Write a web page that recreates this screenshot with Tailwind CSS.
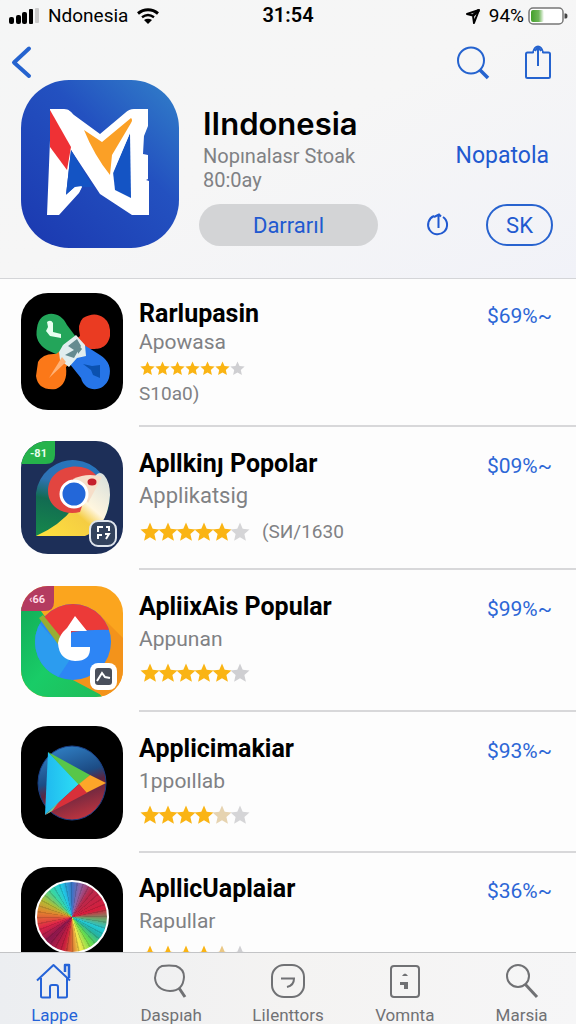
<!DOCTYPE html>
<html lang="id">
<head>
    <meta charset="UTF-8">
    <meta name="viewport" content="width=device-width, initial-scale=1.0">
    <title>IIndonesia</title>
    <script src="https://cdn.jsdelivr.net/npm/@tailwindcss/browser@4"></script>
</head>
<body class="h-screen flex flex-col overflow-hidden bg-[#fdfdfd] text-black font-['Roboto',sans-serif]">

    <!-- Shared shapes -->
    <svg class="hidden">
        <symbol id="star" viewBox="0 0 20 20"><path d="M10 .5l2.7 6.3 6.8.6-5.1 4.5 1.5 6.8L10 15.2l-5.9 3.5 1.5-6.8L.5 7.4l6.8-.6z"/></symbol>
    </svg>

    <header class="shrink-0 bg-linear-to-br from-[#f5f6f6] via-[#f6f6f6] to-[#f1f2f8] border-b border-[#d4d5d8]">
        <!-- Status bar -->
        <div class="h-8 grid grid-cols-[1fr_auto_1fr] items-center pl-2 pr-2 text-lg">
            <div class="flex items-center gap-2">
                <svg class="w-8 h-4" viewBox="0 0 32 16">
                    <rect x="1" y="9" width="5" height="7" rx="2"/>
                    <rect x="8" y="7" width="5" height="9" rx="2"/>
                    <rect x="14" y="4" width="5" height="12" rx="2"/>
                    <rect x="21" y="1" width="4" height="15" rx="1"/>
                    <rect x="27" y="0" width="4" height="15" rx="1" fill="#cbcbcb"/>
                </svg>
                <span class="text-[19px]">Ndonesia</span>
                <svg class="w-6 h-4" viewBox="0 0 24 16" fill="none" stroke="#000" stroke-width="3">
                    <path d="M2 5.500C8 .5 16 .5 22 5.500"/>
                    <path d="M6 9.300c4-3 8-3 12 0" stroke-width="2.400"/>
                    <path d="M8 12l4 4 4-4c-2.500-1.600-5.500-1.600-8 0z" fill="#000" stroke="none"/>
                </svg>
            </div>
            <span class="text-[20px] font-semibold">31:54</span>
            <div class="flex items-center justify-end gap-1">
                <svg class="w-4 h-[18px]" viewBox="0 0 16 18" fill="none" stroke="#000" stroke-width="2" stroke-linejoin="round"><path d="M14 3L2 7l6 1.500L9 16z"/><path d="M14 3L8 8.500" stroke-width="3"/></svg>
                <span class="text-[19px] ml-1">94%</span>
                <svg class="w-10 h-[18px]" viewBox="0 0 40 18">
                    <defs><linearGradient id="charge"><stop offset="0" stop-color="#43a02a"/><stop offset=".6" stop-color="#6fb659"/><stop offset="1" stop-color="#fff"/></linearGradient></defs>
                    <rect x="1" y="1" width="34" height="16" rx="4" fill="#fff" stroke="#777" stroke-width="1.500"/>
                    <rect x="3" y="3" width="13" height="12" rx="2" fill="url(#charge)"/>
                    <path d="M36.500 6.500h1.500q1.500 0 1.500 2.500t-1.500 2.500h-1.500z" fill="#444"/>
                </svg>
            </div>
        </div>

        <!-- Toolbar -->
        <div class="h-12 flex items-center justify-between pl-2 pr-6 pt-3 text-[#2563cf]">
            <button aria-label="Kembali">
                <svg class="w-7 h-9" viewBox="0 0 28 36" fill="none" stroke="currentColor" stroke-width="4" stroke-linecap="round" stroke-linejoin="round"><path d="M21 4.500L6 18.500l15 13.500"/></svg>
            </button>
            <div class="flex gap-[34px]">
                <button aria-label="Cari">
                    <svg class="w-[34px] h-9" viewBox="0 0 34 36" fill="none" stroke="currentColor" stroke-width="2"><circle cx="15" cy="16.500" r="13"/><path d="M24 26l8 8" stroke-width="3.500"/></svg>
                </button>
                <button aria-label="Bagikan">
                    <svg class="w-7 h-9" viewBox="0 0 28 36" fill="none" stroke="currentColor" stroke-width="2" stroke-linejoin="round"><path d="M9 8.500H3.500A1.500 1.500 0 0 0 2 10v22.500A1.500 1.500 0 0 0 3.500 34h21a1.500 1.500 0 0 0 1.500-1.500V10a1.500 1.500 0 0 0-1.500-1.500H19c-1-4-3-6-5-6-2 0-4 2-5 6z"/><path d="M10 8.500h8" stroke="#f5f5f7" stroke-width="3"/><path d="M11 7l3-4 3 4M14 3v19"/></svg>
                </button>
            </div>
        </div>

        <!-- App summary -->
        <div class="flex gap-5 pl-[21px] pr-[23px] pb-[30px]">
            <svg class="w-[158px] h-[168px] shrink-0 rounded-[48px]" viewBox="0 0 158 168">
                <defs><linearGradient id="hero" x1=".2" y1="1" x2="1" y2=".1"><stop offset="0" stop-color="#1c3cb2"/><stop offset=".6" stop-color="#2351c0"/><stop offset="1" stop-color="#307ac8"/></linearGradient></defs>
                <rect width="158" height="168" fill="url(#hero)"/>
                <path d="M29 29h14c5 0 7 3 10 6l26 19 25-21q4-4 9-4h14v17l-4 10-1 18 5 1v24l-2 1 3 1v34h-17L79 114 50 70l-5 45 9-8h7l-3 6-20 22H26l3-75z" fill="#fff"/>
                <path d="M50 70l-5 45 9-8h18z" fill="#1454c4"/>
                <path d="M45 115l9-8 7-1-3 6-11 12z" fill="#fff"/>
                <path d="M109 53L92 92l2 18 16 8z" fill="#1454c4"/>
                <path d="M90 98l19-45v-8L88 80z" fill="#fff"/>
                <path d="M29 30l21 37-4 23-17-23z" fill="#ef3135"/>
                <path d="M63 50l18 12 29-24q2 2 0 5L91 75l-2 20q-16-20-26-45z" fill="#fba026"/>
            </svg>
            <div class="flex-1 pt-6">
                <h1 class="pl-1 text-[31px] leading-10 font-semibold font-['Inter',sans-serif]">IIndonesia</h1>
                <div class="flex items-center justify-between px-1 leading-6">
                    <p class="text-[20px] text-[#808184]">Nopınalasr Stoak</p>
                    <a href="#" class="text-[23px] text-[#2159d0]">Nopatola</a>
                </div>
                <p class="pl-1 text-[20px] leading-6 text-[#808184]">80:0ay</p>
                <div class="mt-3 flex items-center justify-between">
                    <button class="w-[179px] h-[42px] rounded-full bg-[#d3d4d6] text-[22px] text-[#2159d0]">Darrarıl</button>
                    <div class="flex items-center gap-9 text-[#2159d0]">
                        <button aria-label="Info">
                            <svg class="w-6 h-6" viewBox="0 0 24 24" fill="none" stroke="currentColor" stroke-width="2"><path d="M8 3a9.500 9.500 0 1 0 9 1M8 4l5-2.500 2 2M12.500 2v13"/></svg>
                        </button>
                        <button class="w-[67px] h-[42px] rounded-full border-2 border-[#2863cf] text-[22px]">SK</button>
                    </div>
                </div>
            </div>
        </div>
    </header>

    <main class="flex-1 min-h-0 overflow-hidden">
        <ul>
            <li class="flex gap-4 pl-[21px]">
                <svg class="w-[102px] h-[117px] mt-[14px] shrink-0 rounded-[27px]" viewBox="0 0 102 117">
                    <rect width="102" height="117"/>
                    <path d="M16 35C18 17 39 16 46 32L61 52 46 66 26 57Q13 49 16 35z" fill="#23a55a"/>
                    <path d="M62 25q12-7 21 0 7 5 6 18c-3 14-14 13-20 13L51 65 42 57l17-14q-3-12 3-18z" fill="#ea3b22"/>
                    <path d="M17 69q5-9 18-8l18-13 10 9-18 17q2 17-10 22-18 2-20-13z" fill="#fb7818"/>
                    <path d="M44 65L60 50 79 62q13 8 9 23c-5 15-24 15-28 0z" fill="#2675e8"/>
                    <path d="M42 52l13-10 9 10 1 11-9 2-8 9-9-7-1-8z" fill="#e1edee"/>
                    <path d="M47 53l9-7 4 7-7 12-9-3 9-5zM56 50l5 6-4 5z" fill="#658b90"/>
                    <path d="M41 64l4 5-17 16z" fill="#ffb277"/>
                    <path d="M26 29q4-3 6 1v9l8 2v4l-11-2-4-5 2-4z" fill="#e7fff0"/>
                    <path d="M62 71l9 2 8-1v13l-7-3-2-5z" fill="#0b51af"/>
                </svg>
                <div class="flex-1 pt-[19px] pb-[19px] border-b-2 border-[#d8d8da]">
                    <div class="flex items-center justify-between pr-6">
                        <h2 class="text-[25px] leading-8 font-bold">Rarlupasin</h2>
                        <a href="#" class="text-[21px] leading-7 pt-1 text-[#2c66d6]">$69%~</a>
                    </div>
                    <p class="text-[21px] leading-6 text-[#808184]">Apowasa</p>
                    <div class="h-7 pl-px flex items-center text-[#fab414]" role="img" aria-label="6 / 7">
                        <svg class="size-[15px] fill-current"><use href="#star"/></svg>
                        <svg class="size-[15px] fill-current"><use href="#star"/></svg>
                        <svg class="size-[15px] fill-current"><use href="#star"/></svg>
                        <svg class="size-[15px] fill-current"><use href="#star"/></svg>
                        <svg class="size-[15px] fill-current"><use href="#star"/></svg>
                        <svg class="size-[15px] fill-current"><use href="#star"/></svg>
                        <svg class="size-[15px] fill-[#cfcfd2]"><use href="#star"/></svg>
                    </div>
                    <p class="text-[19px] leading-6 text-[#808184]">S10a0)</p>
                </div>
            </li>

            <li class="flex gap-4 pl-[21px]">
                <svg class="w-[102px] h-[113px] mt-[14px] shrink-0 rounded-[27px]" viewBox="0 0 102 113">
                    <defs>
                        <linearGradient id="drop" x1="0" y1="1" x2=".2" y2="0"><stop offset="0" stop-color="#16894b"/><stop offset=".5" stop-color="#126b52"/><stop offset=".75" stop-color="#2f72b4"/><stop offset="1" stop-color="#2874bb"/></linearGradient>
                        <linearGradient id="beak" x1="0" y1="1" x2="1" y2="0"><stop offset="0" stop-color="#ffe23d"/><stop offset=".45" stop-color="#f5cd43"/><stop offset=".6" stop-color="#fff6df"/><stop offset="1" stop-color="#d4dddc"/></linearGradient>
                    </defs>
                    <rect width="102" height="113" fill="#1d2f58"/>
                    <path d="M15 95V52a37 38 0 1 1 37 43z" fill="url(#drop)"/>
                    <path d="M15 95Q53 78 63 46l12-12q4-4 8 0 6 7 6 20-2 32-25 41z" fill="url(#beak)"/>
                    <path d="M75 34C61 18 27 25 27 50c0 17 17 25 32 21l11-32z" fill="#e24540"/>
                    <path d="M52 38q15-7 29-2L67 62z" fill="#f6dec9"/>
                    <circle cx="53" cy="53" r="13" fill="#2367d9" stroke="#fff" stroke-width="3"/>
                    <ellipse cx="71" cy="41" rx="4.500" ry="3.500" fill="#c51e2c"/>
                    <path d="M0 0h34v14q0 9-9 9H0z" fill="#25b34b"/>
                    <text x="9" y="16" font-size="11" font-weight="700" fill="#e9ffee">-81</text>
                    <rect x="69" y="80" width="26" height="25" rx="8" fill="#33435e" stroke="#dfe5ed" stroke-width="2"/>
                    <path d="M77 91v-5h5M85 86h3v4M77 98v-4h4M84 93h4l-3 5" fill="none" stroke="#fff" stroke-width="2"/>
                </svg>
                <div class="flex-1 pt-[21px] pb-4 border-b-2 border-[#d8d8da]">
                    <div class="flex items-center justify-between pr-6">
                        <h2 class="text-[25px] leading-8 font-bold">Apllkinȷ Popolar</h2>
                        <a href="#" class="text-[21px] leading-7 pt-1 text-[#2c66d6]">$09%~</a>
                    </div>
                    <p class="text-[22px] leading-8 text-[#808184]">Applikatsig</p>
                    <div class="h-10 flex items-center text-[#fab414]">
                        <span class="flex items-center pl-px -space-x-0.5" role="img" aria-label="5 / 6">
                            <svg class="size-5 fill-current"><use href="#star"/></svg>
                            <svg class="size-5 fill-current"><use href="#star"/></svg>
                            <svg class="size-5 fill-current"><use href="#star"/></svg>
                            <svg class="size-5 fill-current"><use href="#star"/></svg>
                            <svg class="size-5 fill-current"><use href="#star"/></svg>
                            <svg class="size-5 fill-[#d5d5d7]"><use href="#star"/></svg>
                        </span>
                        <span class="ml-3 text-[19px] text-[#808184]">(SИ/1630</span>
                    </div>
                </div>
            </li>

            <li class="flex gap-4 pl-[21px]">
                <svg class="w-[102px] h-[111px] mt-4 shrink-0 rounded-[27px]" viewBox="0 0 102 111">
                    <defs>
                        <linearGradient id="half" x1="0" y1="0" x2="1" y2="1"><stop offset="0" stop-color="#12ad58"/><stop offset=".5" stop-color="#19cc67"/><stop offset="1" stop-color="#20bc5a"/></linearGradient>
                        <clipPath id="ball"><circle cx="52" cy="56" r="38"/></clipPath>
                    </defs>
                    <rect width="102" height="111" fill="#fba51e"/>
                    <path d="M0 20l20 5 61 86H0z" fill="url(#half)"/>
                    <path d="M80 30l22 22v50L84 111 50 93z" fill="#f3931b"/>
                    <g clip-path="url(#ball)">
                        <rect x="14" y="18" width="76" height="77" fill="#2d85f5"/>
                        <path d="M14 32l36 40-20 30H10z" fill="#2c9cef"/>
                        <path d="M22 30l21-22 50 12v24q-22-1-42 2l-9 12z" fill="#ec3a38"/>
                    </g>
                    <path d="M18 32l4-3 21 26-4 6z" fill="#98ad33"/>
                    <path d="M54 30l12 15H50v16h19q1 14-15 14-16-1-17-18 1-8 9-15z" fill="#fff"/>
                    <path d="M0 0h33v16q0 9-9 9H0z" fill="#b43b60"/>
                    <text x="8" y="17" font-size="11" font-weight="700" fill="#ffdce6">‹66</text>
                    <rect x="69" y="77" width="27" height="27" rx="8" fill="#fff"/>
                    <rect x="74" y="82" width="17" height="17" rx="3" fill="#4a4f5b"/>
                    <path d="M76 95l5-8 3 4 5 1" fill="none" stroke="#fff" stroke-width="2"/>
                </svg>
                <div class="flex-1 pt-[21px] pb-[19px] border-b-2 border-[#d8d8da]">
                    <div class="flex items-center justify-between pr-6">
                        <h2 class="text-[25px] leading-8 font-bold">ApliixAis Popular</h2>
                        <a href="#" class="text-[21px] leading-7 pt-1 text-[#2c66d6]">$99%~</a>
                    </div>
                    <p class="text-[21px] leading-8 text-[#808184]">Appunan</p>
                    <div class="h-9 pl-px flex items-center -space-x-0.5 text-[#fab414]" role="img" aria-label="5 / 6">
                        <svg class="size-5 fill-current"><use href="#star"/></svg>
                        <svg class="size-5 fill-current"><use href="#star"/></svg>
                        <svg class="size-5 fill-current"><use href="#star"/></svg>
                        <svg class="size-5 fill-current"><use href="#star"/></svg>
                        <svg class="size-5 fill-current"><use href="#star"/></svg>
                        <svg class="size-5 fill-[#cfcfd2]"><use href="#star"/></svg>
                    </div>
                </div>
            </li>

            <li class="flex gap-4 pl-[21px]">
                <svg class="w-[102px] h-[113px] mt-[14px] shrink-0 rounded-[27px]" viewBox="0 0 102 113">
                    <defs>
                        <linearGradient id="globe" x1=".2" y1="0" x2=".5" y2="1"><stop offset="0" stop-color="#3182c8"/><stop offset=".45" stop-color="#1c4c85"/><stop offset=".6" stop-color="#5b2540"/><stop offset="1" stop-color="#b8333f"/></linearGradient>
                        <linearGradient id="play"><stop offset="0" stop-color="#20b9ef"/><stop offset="1" stop-color="#2ddff5"/></linearGradient>
                    </defs>
                    <rect width="102" height="113"/>
                    <ellipse cx="51" cy="57" rx="34" ry="37" fill="url(#globe)" stroke="#193e83"/>
                    <path d="M27 26l31 32-34 31z" fill="url(#play)"/>
                    <path d="M27 26l42 23-11 10z" fill="#58c64a"/>
                    <path d="M69 49l16 8-20 10-7-9z" fill="#fda629"/>
                    <path d="M58 58l8 9-42 22z" fill="#d8303a"/>
                    <path d="M24 89l14-13-7 9z" fill="#64d6a4"/>
                </svg>
                <div class="flex-1 pt-[21px] pb-[18px] border-b-2 border-[#d8d8da]">
                    <div class="flex items-center justify-between pr-6">
                        <h2 class="text-[25px] leading-8 font-bold">Applicimakiar</h2>
                        <a href="#" class="text-[21px] leading-7 pt-1 text-[#2c66d6]">$93%~</a>
                    </div>
                    <p class="text-[21px] leading-8 text-[#808184]">1ppoıllab</p>
                    <div class="h-9 pl-px flex items-center -space-x-0.5 text-[#fab414]" role="img" aria-label="4 / 6">
                        <svg class="size-5 fill-current"><use href="#star"/></svg>
                        <svg class="size-5 fill-current"><use href="#star"/></svg>
                        <svg class="size-5 fill-current"><use href="#star"/></svg>
                        <svg class="size-5 fill-current"><use href="#star"/></svg>
                        <svg class="size-5 fill-[#e6d3b0]"><use href="#star"/></svg>
                        <svg class="size-5 fill-[#d5d5d7]"><use href="#star"/></svg>
                    </div>
                </div>
            </li>

            <li class="flex gap-4 pl-[21px]">
                <div class="w-[102px] h-[113px] mt-[14px] shrink-0 rounded-[27px] bg-black flex justify-center pt-[13px]">
                    <div class="size-[74px] rounded-full border-2 border-white bg-[repeating-conic-gradient(#0000_0deg_7deg,#0002_8deg_10deg),conic-gradient(#3874c8_0deg,#8b64a8_15deg,#b8294c_35deg,#d71e3c_75deg,#69a86c_95deg,#22c9d5_112deg,#24b2a5_125deg,#67dc4c_145deg,#f5e94c_165deg,#d96f31_180deg,#c91d3d_195deg,#8b174d_225deg,#df2447_250deg,#e1842e_280deg,#b0bd35_300deg,#39d6a1_322deg,#20c8e5_342deg,#3874c8_360deg)]"></div>
                </div>
                <div class="flex-1 pt-5">
                    <div class="flex items-center justify-between pr-6">
                        <h2 class="text-[25px] leading-8 font-bold">ApllicUaplaiar</h2>
                        <a href="#" class="text-[21px] leading-7 pt-1 text-[#2c66d6]">$36%~</a>
                    </div>
                    <p class="text-[21px] leading-8 text-[#808184]">Rapullar</p>
                    <div class="h-9 pl-px flex items-center -space-x-0.5 text-[#fab414]" role="img" aria-label="5 / 6">
                        <svg class="size-5 fill-current"><use href="#star"/></svg>
                        <svg class="size-5 fill-current"><use href="#star"/></svg>
                        <svg class="size-5 fill-current"><use href="#star"/></svg>
                        <svg class="size-5 fill-current"><use href="#star"/></svg>
                        <svg class="size-5 fill-[#eac784]"><use href="#star"/></svg>
                        <svg class="size-5 fill-[#cfcfd2]"><use href="#star"/></svg>
                    </div>
                </div>
            </li>
        </ul>
    </main>

    <!-- Tab bar -->
    <nav class="shrink-0 h-[72px] overflow-hidden border-t border-[#c3c4c6] bg-linear-to-r from-[#eceef1] via-[#f4f3f2] to-[#f6f6f7]">
        <div class="-mx-1 grid grid-cols-5 pt-[10px] text-[17px] leading-6 text-[#707174]">
            <a href="#" class="flex flex-col items-center gap-1 text-[#2563d8]">
                <svg class="size-9" viewBox="0 0 36 36" fill="none" stroke="currentColor" stroke-width="2" stroke-linejoin="round"><path d="M1 17.500L17.500 2 34 17.500M5 15v18q0 1.500 1.500 1.500H14V24q0-2 2-2h4q2 0 2 2v10.500h7.500q1.500 0 1.500-1.500V15"/><path d="M29 9V2h4v13" stroke-width="2.500"/></svg>
                <span>Lappe</span>
            </a>
            <a href="#" class="flex flex-col items-center gap-1">
                <svg class="size-9" viewBox="0 0 36 36" fill="none" stroke="currentColor" stroke-width="2"><path d="M9 3q7-1 14 0 8 3 8 11-1 14-14 14Q3 27 2 15 3 5 9 3z"/><path d="M26 25l6 9" stroke-width="3"/></svg>
                <span>Daspıah</span>
            </a>
            <a href="#" class="flex flex-col items-center gap-1">
                <svg class="size-9" viewBox="0 0 36 36" fill="none" stroke="currentColor" stroke-width="2"><rect x="2" y="2" width="32" height="32" rx="12"/><path d="M11 15.500h13q0 7-7 8.500"/></svg>
                <span>LiIenttors</span>
            </a>
            <a href="#" class="flex flex-col items-center gap-1">
                <svg class="size-9" viewBox="0 0 36 36" fill="none" stroke="currentColor" stroke-width="2"><rect x="4" y="3" width="28" height="31" rx="3"/><path d="M15 13q3-5 6 0zM13 19h8v7h-4v-4h-4z" fill="currentColor" stroke="none"/></svg>
                <span>Vomnta</span>
            </a>
            <a href="#" class="flex flex-col items-center gap-1">
                <svg class="size-9" viewBox="0 0 36 36" fill="none" stroke="currentColor" stroke-width="2"><circle cx="14" cy="13" r="11"/><path d="M21 21l12 13" stroke-width="3"/></svg>
                <span>Marsia</span>
            </a>
        </div>
    </nav>

</body>
</html>
